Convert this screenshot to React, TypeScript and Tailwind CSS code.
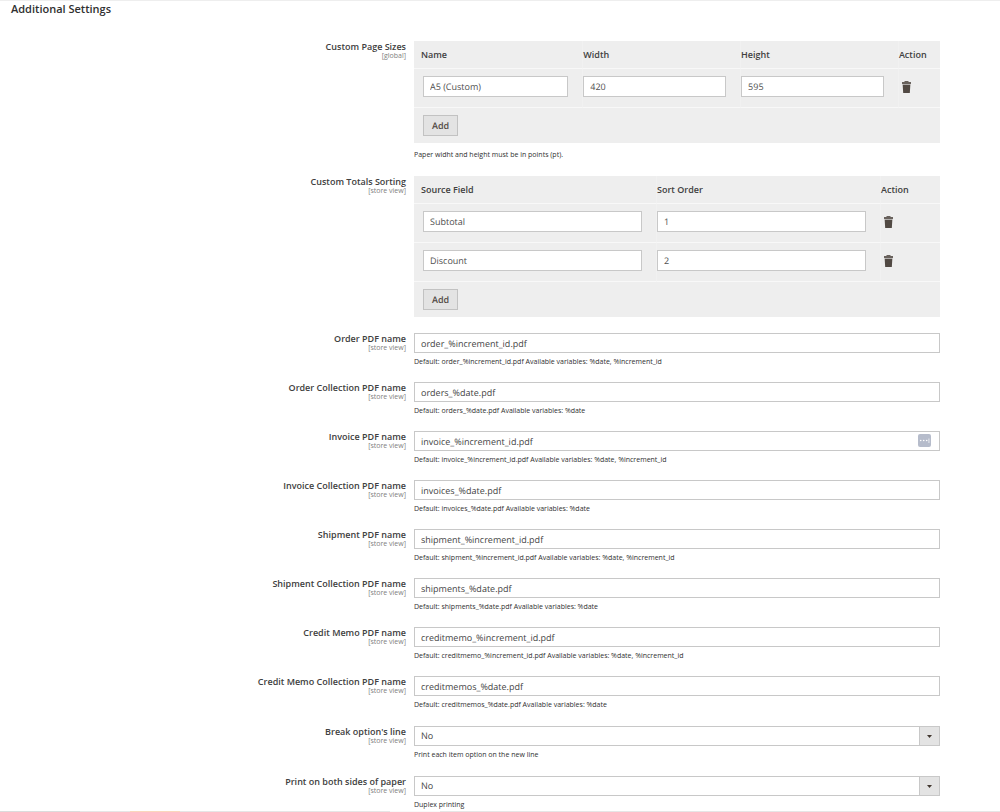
import React, { useId, useState } from 'react';

interface Column {
  label: string;
  width: string;
}

interface RowsTableProps {
  columns: Column[];
  rows: string[][];
}

interface FieldProps {
  label: string;
  scope: string;
  htmlFor?: string;
  note?: string;
  noteClass?: string;
  children: React.ReactNode;
}

interface TextSetting {
  label: string;
  value: string;
  note: string;
  autofill?: boolean;
}

const textSettings: TextSetting[] = [
  { label: 'Order PDF name', value: 'order_%increment_id.pdf', note: 'Default: order_%increment_id.pdf Available variables: %date, %increment_id' },
  { label: 'Order Collection PDF name', value: 'orders_%date.pdf', note: 'Default: orders_%date.pdf Available variables: %date' },
  { label: 'Invoice PDF name', value: 'invoice_%increment_id.pdf', note: 'Default: invoice_%increment_id.pdf Available variables: %date, %increment_id', autofill: true },
  { label: 'Invoice Collection PDF name', value: 'invoices_%date.pdf', note: 'Default: invoices_%date.pdf Available variables: %date' },
  { label: 'Shipment PDF name', value: 'shipment_%increment_id.pdf', note: 'Default: shipment_%increment_id.pdf Available variables: %date, %increment_id' },
  { label: 'Shipment Collection PDF name', value: 'shipments_%date.pdf', note: 'Default: shipments_%date.pdf Available variables: %date' },
  { label: 'Credit Memo PDF name', value: 'creditmemo_%increment_id.pdf', note: 'Default: creditmemo_%increment_id.pdf Available variables: %date, %increment_id' },
  { label: 'Credit Memo Collection PDF name', value: 'creditmemos_%date.pdf', note: 'Default: creditmemos_%date.pdf Available variables: %date' },
];

const TrashIcon = () => (
  <svg width="9" height="12" viewBox="0 0 9 12" fill="#514943" aria-hidden="true">
    <path d="M2.500 0h4v1H9v2H0V1h2.500z" opacity="0.85" />
    <path d="M.5 3h8v1h-8z" opacity="0.4" />
    <path d="M.7 4h7.600l-.5 8H1.200z" />
  </svg>
);

const Field: React.FC<FieldProps> = ({ label, scope, htmlFor, note, noteClass = 'mt-1', children }) => (
  <div className="grid grid-cols-[minmax(0,406fr)_minmax(0,534fr)_minmax(0,60fr)]">
    <div className="text-right">
      {htmlFor ? (
        <label htmlFor={htmlFor} className="block text-[9px] leading-[11px] font-semibold text-[#404040]">{label}</label>
      ) : (
        <div className="text-[9px] leading-[11px] font-semibold text-[#404040]">{label}</div>
      )}
      <div className="text-[7px] leading-[8px] text-[#808080]">{scope}</div>
    </div>
    <div className="pl-2">
      {children}
      {note && <p className={`${noteClass} text-[7px] leading-[10px] text-[#303030]`}>{note}</p>}
    </div>
  </div>
);

const RowsTable: React.FC<RowsTableProps> = ({ columns, rows: initial }) => {
  const [rows, setRows] = useState(initial);

  const setCell = (row: number, col: number, value: string) =>
    setRows(rows.map((r, i) => (i === row ? r.map((c, j) => (j === col ? value : c)) : r)));

  return (
    <table className="mb-px w-full table-fixed border-separate border-spacing-0 bg-[#eee] text-[9px] text-[#444]">
      <colgroup>
        {columns.map(c => <col key={c.label} className={c.width} />)}
      </colgroup>
      <thead>
        <tr className="h-7">
          {columns.map((c, i) => (
            <th key={c.label} className={`border-b border-[#f8f8f8] p-0 text-left leading-[12px] font-semibold text-[#404040] ${i === 0 ? 'pl-[7px]' : 'border-l border-l-[#f1f1f1]'}`}>
              {c.label}
            </th>
          ))}
        </tr>
      </thead>
      <tbody>
        {rows.map((row, i) => (
          <tr key={i}>
            {row.map((cell, j) => (
              <td key={j} className={`border-b border-[#f8f8f8] pt-[7px] pr-[14px] pb-[10px] ${j === 0 ? 'pl-[9px]' : 'border-l border-l-[#f1f1f1]'}`}>
                <input
                  type="text"
                  aria-label={columns[j].label}
                  value={cell}
                  onChange={e => setCell(i, j, e.target.value)}
                  className="block h-[21px] w-full border border-[#c8c8c8] bg-white px-[6px] text-[9px] text-[#505050] [text-rendering:geometricPrecision]"
                />
              </td>
            ))}
            <td className="border-b border-l border-[#f8f8f8] border-l-[#f1f1f1] pt-[7px] pb-[10px]">
              <button
                type="button"
                aria-label="Delete"
                onClick={() => setRows(rows.filter((_, k) => k !== i))}
                className="flex h-[21px] items-center px-[3px]"
              >
                <TrashIcon />
              </button>
            </td>
          </tr>
        ))}
      </tbody>
      <tfoot>
        <tr>
          <td colSpan={columns.length} className="pt-[7px] pb-[7px] pl-[9px]">
            <button
              type="button"
              onClick={() => setRows([...rows, columns.slice(1).map(() => '')])}
              className="block h-[21px] border border-[#c2c2c2] bg-[#e3e3e3] px-2 leading-[12px] font-semibold text-[#514943] [text-rendering:geometricPrecision]"
            >
              Add
            </button>
          </td>
        </tr>
      </tfoot>
    </table>
  );
};

const TextField: React.FC<TextSetting> = ({ label, value, note, autofill }) => {
  const id = useId();
  return (
    <Field label={label} scope="[store view]" htmlFor={id} note={note}>
      <div className="relative">
        <input id={id} type="text" defaultValue={value} className="block h-5 w-full border border-[#c8c8c8] bg-white px-[6px] text-[9px] text-[#444] [text-rendering:geometricPrecision]" />
        {autofill && (
          <button type="button" aria-label="Autofill" className="absolute top-[3px] right-[9px]">
            <svg width="13" height="13" viewBox="0 0 13 13" aria-hidden="true">
              <rect width="13" height="13" rx="2" fill="#b6bccb" />
              <g fill="#fff">
                <circle cx="2.700" cy="6.500" r="0.800" />
                <circle cx="5.700" cy="6.500" r="0.800" />
                <circle cx="8.700" cy="6.500" r="0.800" />
                <rect x="10.600" y="4.500" width="0.700" height="4.500" />
              </g>
            </svg>
          </button>
        )}
      </div>
    </Field>
  );
};

const SelectField: React.FC<{ label: string; note: string }> = ({ label, note }) => {
  const id = useId();
  return (
    <Field label={label} scope="[store view]" htmlFor={id} note={note}>
      <div className="relative">
        <select id={id} defaultValue="No" className="block h-5 w-full appearance-none border border-[#c8c8c8] bg-white px-[6px] text-[9px] text-[#444] [text-rendering:geometricPrecision]">
          <option>Yes</option>
          <option>No</option>
        </select>
        <span className="pointer-events-none absolute inset-y-0 right-0 flex w-[21px] items-center justify-center border border-[#c8c8c8] bg-[#e3e3e3]">
          <svg width="5" height="3" viewBox="0 0 5 3" fill="#41362f" aria-hidden="true">
            <path d="M0 0h5L2.500 3z" />
          </svg>
        </span>
      </div>
    </Field>
  );
};

const App: React.FC = () => (
  <div className="bg-white font-['Open_Sans',sans-serif] text-[#303030]">
    <section className="border-t border-[#eee] pb-px">
      <h2 className="mb-6 pl-[11px] text-[11px] leading-[16px] font-semibold">Additional Settings</h2>

      <div className="flex flex-col gap-[15px]">
        <Field label="Custom Page Sizes" scope="[global]" note="Paper widht and height must be in points (pt)." noteClass="mt-[7px] mb-px">
          <RowsTable
            columns={[
              { label: 'Name', width: 'w-[32%]' },
              { label: 'Width', width: 'w-[30%]' },
              { label: 'Height', width: 'w-[30%]' },
              { label: 'Action', width: 'w-[8%]' },
            ]}
            rows={[['A5 (Custom)', '420', '595']]}
          />
        </Field>
        <Field label="Custom Totals Sorting" scope="[store view]">
          <RowsTable
            columns={[
              { label: 'Source Field', width: 'w-[46%]' },
              { label: 'Sort Order', width: 'w-auto' },
              { label: 'Action', width: 'w-[60px]' },
            ]}
            rows={[['Subtotal', '1'], ['Discount', '2']]}
          />
        </Field>

        {textSettings.map(s => <TextField key={s.label} {...s} />)}

        <div className="flex flex-col gap-4 pt-px">
          <SelectField label="Break option's line" note="Print each item option on the new line" />
          <SelectField label="Print on both sides of paper" note="Duplex printing" />
        </div>
      </div>
    </section>

    {/* top edge of the next panel */}
    <div className="flex h-px bg-[#e6e6e6]">
      <div className="w-[8%] bg-[#dcdcdc]" />
      <div className="ml-[5%] w-[5%] bg-[#fad7bd]" />
      <div className="ml-[21%] w-[5%] bg-[#f8f8f8]" />
    </div>
  </div>
);

export default App;
